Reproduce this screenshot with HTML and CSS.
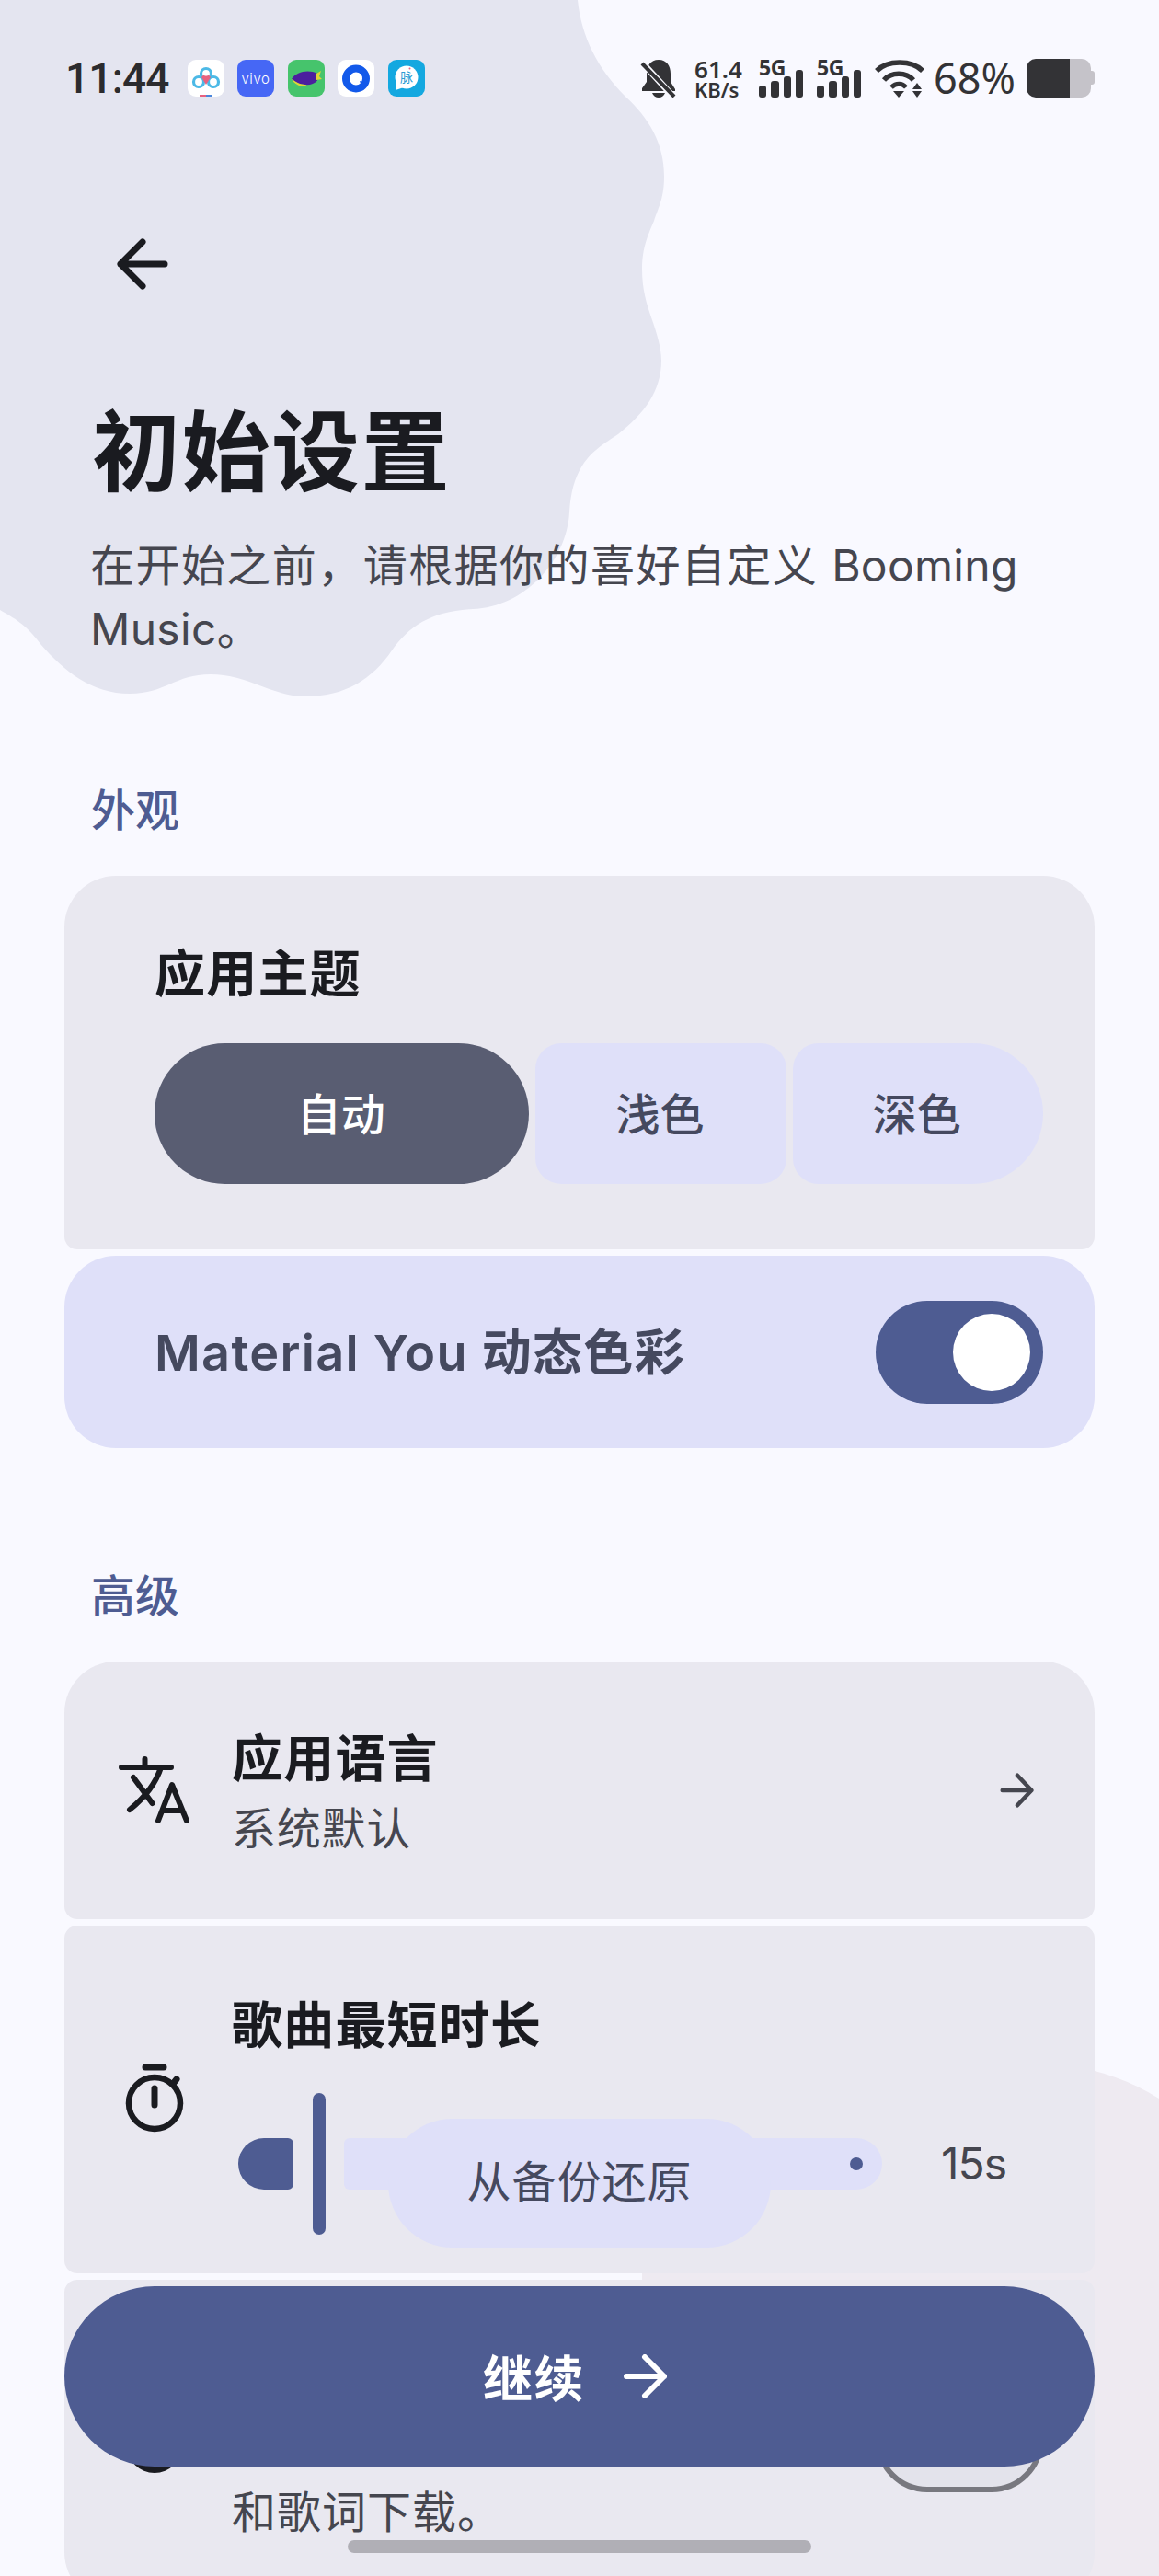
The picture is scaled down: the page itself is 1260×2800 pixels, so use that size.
FILE: index.html
```html
<!DOCTYPE html>
<html lang="zh-CN">
<head>
<meta charset="utf-8">
<title>初始设置</title>
<link rel="stylesheet" href="styles.css">
</head>
<body>
<div class="page">
  <svg class="blobs" width="1260" height="2800" viewBox="0 0 1260 2800" aria-hidden="true">
    <path fill="#e4e5f0" d="M0 0 L628 0 C632 40 650 75 680 105 C705 128 722 155 722 192 C722 215 716 225 711 240 C703 258 698 272 698 292 C698 315 703 330 708 345 C714 362 719 378 719 392 C719 425 700 450 672 472 C650 487 622 500 619 557 C616 610 570 660 514 662 C470 664 445 680 426 707 C405 738 375 757 333 757 C295 757 270 733 229 733 C190 733 180 754 141 754 C100 754 70 730 44 700 C28 678 15 672 0 663 Z"/>
    <path fill="#eeeaf1" d="M698 2800 L698 2440 C800 2330 1000 2240 1160 2245 C1195 2250 1230 2262 1260 2281 L1260 2800 Z"/>
  </svg>

  <div class="status">
    <div class="status-left">
      <span class="time">11:44</span>
      <div class="app-icons">
        <svg class="app" viewBox="0 0 40 40"><rect width="40" height="40" rx="9" fill="#fff"/><circle cx="12" cy="24" r="5.5" fill="none" stroke="#4cb9e6" stroke-width="3.2"/><circle cx="28" cy="24" r="5.5" fill="none" stroke="#4cb9e6" stroke-width="3.2"/><circle cx="20" cy="15" r="5.5" fill="none" stroke="#4cb9e6" stroke-width="3.2"/><path d="M15 19 L20 27 L25 19 A6 6 0 0 0 15 19Z" fill="#e8617f"/><circle cx="20" cy="15" r="2.6" fill="#fff"/><rect x="13" y="38" width="7" height="2" fill="#e8617f"/><rect x="20" y="38" width="7" height="2" fill="#4a86dc"/></svg>
        <svg class="app" viewBox="0 0 40 40"><rect width="40" height="40" rx="9" fill="#4667f5"/><text x="20" y="25.500" text-anchor="middle" class="vivo">vivo</text></svg>
        <svg class="app" viewBox="0 0 40 40"><rect width="40" height="40" rx="9" fill="#46c46c"/><path d="M4 21 C9 13 22 10 32 15 C34 19 33 24 27 26 C20 29 10 26 4 21Z" fill="#4b1f9e"/><path d="M4 21 C9 24 13 27 19 27 L22 29 L14 29 C10 27 6 25 4 21Z" fill="#e0d437"/><path d="M31 15 L36 12 L34 18 L37 21 L31 22Z" fill="#e0d437"/></svg>
        <svg class="app" viewBox="0 0 40 40"><rect width="40" height="40" rx="9" fill="#fff"/><circle cx="20" cy="20.500" r="11" fill="none" stroke="#1259ea" stroke-width="8"/><circle cx="22" cy="19" r="4.500" fill="#fff"/><path d="M24 23 L33 26 L27 32Z" fill="#1259ea"/></svg>
        <svg class="app" viewBox="0 0 40 40"><rect width="40" height="40" rx="9" fill="#14a8e0"/><circle cx="20" cy="19" r="12.500" fill="#fff"/><path d="M9 24 L8 33 L17 30Z" fill="#fff"/><text x="20" y="24" text-anchor="middle" class="mai">脉</text><circle cx="23.500" cy="9.500" r="1" fill="#e8617f"/></svg>
      </div>
    </div>
    <div class="status-right">
      <svg class="bell" width="40" height="42" viewBox="0 0 40 42"><path fill="#333336" d="M20 1 C29 1 33 8 33 16 L33 25 L38 33 L38 35 L2 35 L2 32 L7 25 L7 16 C7 8 11 1 20 1Z"/><path fill="#333336" d="M13 37 H27 C26 40 23 42 20 42 C17 42 14 40 13 37Z"/><path d="M3 5 L36 41" stroke="#f9f9ff" stroke-width="7"/><path d="M2 5 L37 41" stroke="#333336" stroke-width="4"/></svg>
      <div class="speed"><span class="speed-num">61.4</span><span class="speed-unit">KB/s</span></div>
      <div class="signal">
        <span class="five-g">5G</span>
        <svg width="48" height="30" viewBox="0 0 48 30"><rect x="0" y="17" width="8" height="13" rx="3" fill="#333336"/><rect x="13" y="12" width="9" height="18" rx="3" fill="#333336"/><rect x="27" y="7" width="8" height="23" rx="3" fill="#333336"/><rect x="40" y="0" width="8" height="30" rx="3" fill="#333336"/></svg>
      </div>
      <div class="signal">
        <span class="five-g">5G</span>
        <svg width="48" height="30" viewBox="0 0 48 30"><rect x="0" y="17" width="8" height="13" rx="3" fill="#333336"/><rect x="13" y="12" width="9" height="18" rx="3" fill="#333336"/><rect x="27" y="7" width="8" height="23" rx="3" fill="#333336"/><rect x="40" y="0" width="8" height="30" rx="3" fill="#333336"/></svg>
      </div>
      <svg class="wifi" width="54" height="42" viewBox="0 0 54 42"><path d="M2 13 C14 1 40 1 52 13" fill="none" stroke="#333336" stroke-width="5.500"/><path d="M10 23 C18 14 34 14 42 23" fill="none" stroke="#333336" stroke-width="5.500"/><path d="M18 31 C23 26 30 26 34 31" fill="none" stroke="#333336" stroke-width="5"/><path d="M20 35 H32 L26 42Z" fill="#333336"/><path d="M41 33 L46 26 L51 33Z" fill="#333336"/><path d="M41 35 H51 L46 42Z" fill="#333336"/></svg>
      <span class="percent">68%</span>
      <div class="battery"><div class="battery-fill"></div><div class="battery-rest"></div><div class="battery-nub"></div></div>
    </div>
  </div>

  <div class="nav">
    <svg width="60" height="60" viewBox="0 0 60 60"><path d="M54 30 H6 M30 6 L6 30 L30 54" fill="none" stroke="#1a1b20" stroke-width="7" stroke-linecap="round" stroke-linejoin="round"/></svg>
  </div>

  <header class="header">
    <h1 class="title">初始设置</h1>
    <p class="subtitle">在开始之前，请根据你的喜好自定义 <span class="latin">Booming</span> <span class="latin">Music</span>。</p>
  </header>

  <section class="section">
    <h2 class="section-label">外观</h2>
    <div class="group">
      <div class="card card-top theme-card">
        <div class="row-title theme-title">应用主题</div>
        <div class="segments">
          <div class="segment segment-active">自动</div>
          <div class="segment segment-mid">浅色</div>
          <div class="segment segment-end">深色</div>
        </div>
      </div>
      <div class="card-accent">
        <span class="accent-label">Material You 动态色彩</span>
        <div class="switch switch-on"><div class="knob"></div></div>
      </div>
    </div>
  </section>

  <section class="section section-advanced">
    <h2 class="section-label">高级</h2>
    <div class="group">
      <div class="card card-top lang-card">
        <svg class="row-icon" width="80" height="80" viewBox="0 0 80 80"><path d="M7 15 H61 M32.500 6 V15 M20 26 L40.500 54 M50 15 Q42 40 16 61 M47 73 L62 34 L78 73 M52 62 H73" fill="none" stroke="#1a1b20" stroke-width="6" stroke-linecap="round" stroke-linejoin="round"/></svg>
        <div class="row-text">
          <div class="row-title">应用语言</div>
          <div class="row-sub">系统默认</div>
        </div>
        <svg class="chevron" width="38" height="38" viewBox="0 0 42 42"><path d="M3 21 H38 M21 3 L38 21 L21 39" fill="none" stroke="#45464f" stroke-width="5" stroke-linecap="round" stroke-linejoin="round"/></svg>
      </div>
      <div class="card duration-card">
        <svg class="row-icon" width="80" height="80" viewBox="0 0 80 80"><circle cx="43" cy="44" r="28" fill="none" stroke="#1a1b20" stroke-width="6.500"/><path d="M33 5 H53 M43 28 V46 M63 23 L67 18" fill="none" stroke="#1a1b20" stroke-width="7" stroke-linecap="round"/></svg>
        <div class="duration-body">
          <div class="row-title">歌曲最短时长</div>
          <div class="slider-row">
            <div class="slider">
              <div class="slider-active"></div>
              <div class="slider-handle"></div>
              <div class="slider-rest"><div class="slider-dot"></div></div>
            </div>
            <span class="slider-value">15s</span>
          </div>
        </div>
      </div>
      <div class="card card-bottom last-card">
        <div class="last-icon"></div>
        <div class="last-text">和歌词下载。</div>
        <div class="switch switch-off"></div>
      </div>
    </div>
  </section>

  <button class="restore">从备份还原</button>
  <button class="continue"><span>继续</span><svg width="48" height="48" viewBox="0 0 48 48"><path d="M4 24 H45 M24 3 L45 24 L24 45" fill="none" stroke="#fff" stroke-width="6" stroke-linecap="round" stroke-linejoin="round"/></svg></button>
  <div class="gesture"></div>
</div>
</body>
</html>
```
FILE: styles.css
```css
* { box-sizing: border-box; }
html, body { margin: 0; padding: 0; }
body { background: #f9f9ff; font-family: "Inter", "Noto Sans CJK SC", sans-serif; color: #1a1b20; }
.page { position: relative; width: 1260px; height: 2800px; overflow: hidden; background: #f9f9ff; }
.blobs { position: absolute; left: 0; top: 0; }
.status, .nav, .header, .section { position: relative; }

.status { display: flex; justify-content: space-between; align-items: center; height: 42px; margin-top: 64px; padding: 0 74px 0 71px; }
.page > .status { top: 0; }
.status-left { display: flex; align-items: center; gap: 20px; }
.time { font-family: "Roboto", sans-serif; font-weight: 500; font-size: 46px; letter-spacing: -0.8px; color: #2b2b2e; line-height: 42px; }
.app-icons { display: flex; gap: 14.500px; }
.app { width: 40px; height: 40px; display: block; }
.vivo { font-family: "Inter", sans-serif; font-size: 15px; font-weight: 300; fill: #fff; letter-spacing: 0.600px; }
.mai { font-family: "Noto Sans CJK SC", sans-serif; font-size: 14px; fill: #2a9cd4; }
.status-right { display: flex; align-items: center; color: #333336; }
.bell { margin-right: 19px; }
.speed { display: flex; flex-direction: column; font-family: "Noto Sans", sans-serif; font-weight: 600; width: 51px; margin-right: 19px; }
.speed-num { font-size: 26px; line-height: 24px; }
.speed-unit { font-size: 22px; line-height: 20px; white-space: nowrap; }
.signal { position: relative; width: 48px; height: 42px; margin-right: 15px; display: flex; align-items: flex-end; }
.five-g { position: absolute; left: 0; top: -2px; font-family: "Noto Sans", sans-serif; font-weight: 700; font-size: 23px; line-height: 22px; letter-spacing: -0.500px; }
.wifi { margin-left: 0; margin-right: 10px; }
.percent { font-family: "Noto Sans", sans-serif; font-size: 45px; line-height: 42px; margin-right: 12px; }
.battery { position: relative; display: flex; width: 70px; height: 42px; }
.battery-fill { width: 47px; background: #333336; border-radius: 10px 0 0 10px; }
.battery-rest { width: 23px; background: #c5c3c9; border-radius: 0 10px 10px 0; }
.battery-nub { position: absolute; right: -4px; top: 13px; width: 4px; height: 15px; background: #c5c3c9; border-radius: 0 3px 3px 0; }

.nav { margin-top: 151px; padding-left: 125px; height: 60px; }
.nav svg { display: block; }
.header { padding: 0 90px 0 100px; margin-top: 118px; }
.title { margin: 0; font-family: "Noto Sans CJK SC", sans-serif; font-weight: 700; font-size: 96px; line-height: 100px; letter-spacing: 1.500px; color: #1a1b20; }
.subtitle { margin: 45px 0 0 -2px; font-size: 48px; line-height: 69px; letter-spacing: 1.450px; color: #45464f; }
.latin { letter-spacing: 0.300px; }

.section { margin-top: 129px; }
.section-advanced { margin-top: 127px; }
.section-label { margin: 0 0 37px; padding-left: 99px; font-weight: 500; font-size: 48px; line-height: 68px; color: #4e5c92; }
.group { display: flex; flex-direction: column; gap: 7px; padding: 0 70px; }
.card { background: #e9e8f0; border-radius: 14px; }
.card-top { border-radius: 56px 56px 14px 14px; }
.card-bottom { border-radius: 14px 14px 56px 56px; }
.row-title { font-family: "Noto Sans CJK SC", sans-serif; font-weight: 700; font-size: 55px; line-height: 70px; letter-spacing: 1.200px; color: #1a1b20; }

.theme-card { height: 406px; padding: 67px 56px 0 98px; }
.theme-title { margin-bottom: 45px; }
.segments { display: flex; gap: 7px; }
.segment { flex: 2; height: 153px; display: flex; align-items: center; justify-content: center; padding: 0 2px 6px 0; font-family: "Noto Sans CJK SC", sans-serif; font-size: 48px; font-weight: 500; color: #45495f; background: #dfe0f9; }
.segment-active { flex: 3; background: #595d72; color: #fff; border-radius: 77px; }
.segment-mid { border-radius: 28px; }
.segment-end { border-radius: 28px 77px 77px 28px; }

.card-accent { display: flex; align-items: center; justify-content: space-between; height: 209px; padding: 0 56px 6px 98px; background: #dfe0f9; border-radius: 56px; }
.accent-label { font-weight: 600; font-size: 54px; letter-spacing: 1.300px; color: #45495f; }
.switch { width: 182px; height: 112px; border-radius: 56px; flex: none; }
.switch-on { display: flex; align-items: center; justify-content: flex-end; padding-right: 14px; background: #4e5c92; position: relative; top: 3px; }
.knob { width: 84px; height: 84px; border-radius: 50%; background: #fff; }
.switch-off { background: #e3e3eb; border: 6px solid #78787f; margin-bottom: 53px; }

.lang-card { display: flex; align-items: center; height: 280px; padding: 0 65px 0 55px; }
.row-icon { flex: none; display: block; }
.row-text { flex: 1; margin-left: 47px; padding-bottom: 2px; }
.row-sub { margin-top: 8px; font-family: "Noto Sans CJK SC", sans-serif; font-size: 48px; line-height: 68px; letter-spacing: 0.800px; color: #45464f; }
.chevron { flex: none; }

.duration-card { display: flex; align-items: center; height: 378px; padding: 0 0 0 55px; }
.duration-body { flex: 1; align-self: flex-end; margin-left: 47px; padding-bottom: 42px; }
.slider-row { display: flex; align-items: center; margin-top: 43px; padding-left: 3px; }
.slider { display: flex; align-items: center; width: 700px; margin-left: 4px; }
.slider-active { width: 60px; height: 56px; background: #4e5c92; border-radius: 28px 6px 6px 28px; }
.slider-handle { width: 14px; height: 154px; margin: 0 20px 0 21px; background: #4e5c92; border-radius: 7px; }
.slider-rest { flex: 1; display: flex; align-items: center; justify-content: flex-end; height: 56px; padding-right: 21px; background: #dfe0f9; border-radius: 6px 28px 28px 6px; }
.slider-dot { width: 14px; height: 14px; border-radius: 50%; background: #4e5c92; }
.slider-value { margin-left: 64px; font-size: 48px; letter-spacing: -1px; color: #45464f; line-height: 56px; }

.last-card { display: flex; align-items: flex-end; height: 352px; padding: 0 56px 68px 0; }
.last-icon { width: 60px; height: 60px; margin: 0 0 74px 68px; border-radius: 50%; background: #1a1b20; flex: none; }
.last-text { flex: 1; margin-left: 54px; font-family: "Noto Sans CJK SC", sans-serif; font-size: 48px; line-height: 70px; letter-spacing: 1px; color: #45464f; }

.restore { position: absolute; left: 422px; top: 2303px; width: 416px; height: 140px; border: 0; padding: 0 0 10px; border-radius: 70px; background: #dfe0f9; color: #45495f; font-family: "Noto Sans CJK SC", sans-serif; font-size: 48px; letter-spacing: 1px; }
.continue { position: absolute; left: 70px; top: 2485px; width: 1120px; height: 196px; display: flex; align-items: center; justify-content: center; gap: 41px; border: 0; padding: 0 10px 2px 0; border-radius: 98px; background: #4e5c92; color: #fff; font-family: "Noto Sans CJK SC", sans-serif; font-weight: 700; font-size: 54px; letter-spacing: 1.500px; }
.continue svg { position: relative; top: 1px; }
.gesture { position: absolute; left: 378px; top: 2761px; width: 504px; height: 14px; border-radius: 7px; background: #b0afb6; }
```
